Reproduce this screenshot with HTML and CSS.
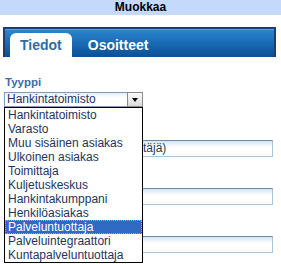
FILE: index.html
```html
<!DOCTYPE html>
<html>
	<head>
		<meta charset="UTF-8">
		<title>Muokkaa</title>
		<link rel="stylesheet" href="styles.css">
	</head>
	<body>
		<div class="title">Muokkaa</div>
		<div class="tabs">
			<span class="tab current">Tiedot</span>
			<span class="tab">Osoitteet</span>
		</div>
		<div class="form">
			<div class="field field-select">
				<label>Tyyppi</label>
				<div class="select-wrap">
					<div class="select">
						<span class="select-text">Hankintatoimisto</span>
						<span class="arrow"></span>
					</div>
					<ul class="dropdown">
						<li>Hankintatoimisto</li>
						<li>Varasto</li>
						<li>Muu sisäinen asiakas</li>
						<li>Ulkoinen asiakas</li>
						<li>Toimittaja</li>
						<li>Kuljetuskeskus</li>
						<li>Hankintakumppani</li>
						<li>Henkilöasiakas</li>
						<li class="selected">Palveluntuottaja</li>
						<li>Palveluintegraattori</li>
						<li>Kuntapalveluntuottaja</li>
					</ul>
				</div>
			</div>
			<div class="field">
				<label></label>
				<div class="text"><span class="hidden-part"></span>täjä)</div>
			</div>
			<div class="field">
				<label></label>
				<div class="text"></div>
			</div>
			<div class="field">
				<label></label>
				<div class="text"></div>
			</div>
		</div>
	</body>
</html>
```

FILE: styles.css
```css
*{
	margin: 0;
	padding: 0;
	box-sizing: border-box;
}
body{
	font-family: "Liberation Sans", Arial, sans-serif;
	background: #fff;
	width: 281px;
}
.title{
	height: 15px;
	line-height: 15px;
	background-color: #c5d9fd;
	text-align: center;
	font-size: 12px;
	font-weight: bold;
	color: #000;
}
.tabs{
	margin: 12px 5px 0 3px;
	height: 30px;
	padding: 4px 0 0 5px;
	border: 2px solid #1f3d75;
	border-bottom: 0;
	background: linear-gradient(#2b86cf, #1a6bb5 50%, #0b4f95);
	box-shadow: inset 0 1px 0 #5aa2dc;
	display: flex;
	align-items: flex-end;
}
.tab{
	height: 24px;
	line-height: 24px;
	padding: 0 10px;
	margin-right: 6px;
	font-size: 14px;
	font-weight: bold;
	color: #fff;
}
.tab.current{
	background-color: #fff;
	color: #2e6da4;
	border-radius: 6px 6px 0 0;
}
.form{
	padding: 18px 0 0 4px;
}
.field{
	margin-bottom: 14px;
}
.field-select{
	margin-bottom: 16px;
}
.field label{
	display: block;
	height: 14px;
	line-height: 14px;
	margin: 0 0 3px 1px;
	font-size: 11.5px;
	font-weight: bold;
	color: #3a6ea5;
}
.select-wrap{
	position: relative;
	width: 139px;
}
.select{
	height: 15px;
	border: 1px solid #7f9db9;
	background: linear-gradient(#e6eef6, #fff 5px);
	display: flex;
	align-items: center;
}
.select-text{
	flex: 1;
	padding-left: 2px;
	font-size: 12px;
	color: #1d3461;
	line-height: 13px;
}
.arrow{
	width: 16px;
	height: 15px;
	margin: -1px -1px -1px 0;
	border: 1px solid #8a8a8a;
	background: linear-gradient(#fafafa, #dcdcdc);
	position: relative;
}
.arrow:after{
	content: "";
	position: absolute;
	left: 4px;
	top: 5px;
	border-left: 3.5px solid transparent;
	border-right: 3.5px solid transparent;
	border-top: 4px solid #000;
}
.dropdown{
	position: absolute;
	top: 15px;
	left: 0;
	width: 139px;
	border: 1px solid #000;
	background-color: #fff;
	list-style: none;
	z-index: 2;
}
.dropdown li{
	height: 14px;
	line-height: 14px;
	padding-left: 3px;
	font-size: 12px;
	color: #1d3461;
	white-space: nowrap;
}
.dropdown li.selected{
	background-color: #316ac5;
	color: #fff;
	outline: 1px dotted #d9a441;
	outline-offset: -1px;
}
.text{
	width: 269px;
	height: 17px;
	line-height: 15px;
	border: 1px solid #a7c5dc;
	border-top-color: #6b8cab;
	background: linear-gradient(#d4e3f1, #fff 6px);
	font-size: 12px;
	color: #2d3c55;
	white-space: nowrap;
	overflow: hidden;
}
.hidden-part{
	display: inline-block;
	width: 138px;
}
```
